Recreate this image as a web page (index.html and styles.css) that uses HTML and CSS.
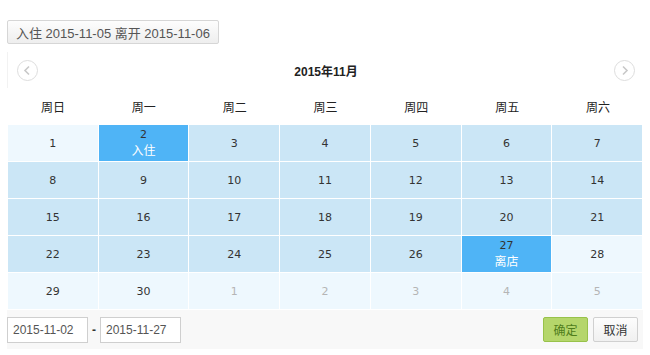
FILE: index.html
```html
<!DOCTYPE html>
<html lang="zh-CN">
<head>
    <meta charset="UTF-8">
    <meta name="viewport" content="width=device-width, initial-scale=1.0">
    <title>入住离店日历</title>
    <link rel="stylesheet" href="styles.css">
</head>
<body>
    <div class="page">
        <button class="range-toggle">入住 2015-11-05 离开 2015-11-06</button>

        <div class="calendar">
            <div class="cal-head">
                <span class="nav prev">
                    <svg width="21" height="21" viewBox="0 0 21 21"><circle cx="10.5" cy="10.5" r="10" fill="none" stroke="#ddd"/><path d="M12 6.5 L8 10.5 L12 14.5" fill="none" stroke="#c8c8c8" stroke-width="1.6"/></svg>
                </span>
                <span class="month">2015年11月</span>
                <span class="nav next">
                    <svg width="21" height="21" viewBox="0 0 21 21"><circle cx="10.5" cy="10.5" r="10" fill="none" stroke="#ddd"/><path d="M9 6.5 L13 10.5 L9 14.5" fill="none" stroke="#c8c8c8" stroke-width="1.6"/></svg>
                </span>
            </div>

            <div class="week">
                <span>周日</span><span>周一</span><span>周二</span><span>周三</span><span>周四</span><span>周五</span><span>周六</span>
            </div>

            <div class="days">
                <div class="day past">1</div>
                <div class="day picked">2<small>入住</small></div>
                <div class="day">3</div>
                <div class="day">4</div>
                <div class="day">5</div>
                <div class="day">6</div>
                <div class="day">7</div>

                <div class="day">8</div>
                <div class="day">9</div>
                <div class="day">10</div>
                <div class="day">11</div>
                <div class="day">12</div>
                <div class="day">13</div>
                <div class="day">14</div>

                <div class="day">15</div>
                <div class="day">16</div>
                <div class="day">17</div>
                <div class="day">18</div>
                <div class="day">19</div>
                <div class="day">20</div>
                <div class="day">21</div>

                <div class="day">22</div>
                <div class="day">23</div>
                <div class="day">24</div>
                <div class="day">25</div>
                <div class="day">26</div>
                <div class="day picked">27<small>离店</small></div>
                <div class="day past">28</div>

                <div class="day past">29</div>
                <div class="day past">30</div>
                <div class="day other">1</div>
                <div class="day other">2</div>
                <div class="day other">3</div>
                <div class="day other">4</div>
                <div class="day other">5</div>
            </div>

            <div class="cal-foot">
                <input type="text" value="2015-11-02">
                <span class="dash">-</span>
                <input type="text" value="2015-11-27">
                <div class="actions">
                    <button class="btn ok">确定</button>
                    <button class="btn cancel">取消</button>
                </div>
            </div>
        </div>
    </div>
</body>
</html>
```

FILE: styles.css
```css
:root {
    --cell-color: #cbe6f6;
    --cell-light: #eef8fe;
    --cell-picked: #4fb4f6;
    --text-color: #333;
}

body {
    margin: 0;
    padding: 0;
    background: #fff;
    color: var(--text-color);
    font-family: "Liberation Sans", "Noto Sans CJK SC", sans-serif;
}

.page {
    padding: 20px 0 0 7px;
    width: 636px;
}

.range-toggle {
    display: block;
    height: 24px;
    padding: 0 8px;
    font-family: "Liberation Sans", "Noto Sans CJK SC", sans-serif;
    font-size: 13px;
    color: #555;
    background: linear-gradient(#fdfdfd, #eeeeee);
    border: 1px solid #d6d6d6;
    border-radius: 2px;
}

.calendar {
    margin-top: 8px;
}

.cal-head {
    display: flex;
    align-items: center;
    justify-content: space-between;
    height: 36px;
    padding: 0 8px 0 9px;
    border-left: 1px solid #f2f2f2;
}

.nav {
    display: flex;
    width: 21px;
    height: 21px;
}

.month {
    font-family: "Liberation Sans", "Noto Sans CJK SC", sans-serif;
    font-size: 12px;
    font-weight: bold;
    color: #222;
}

.week {
    display: grid;
    grid-template-columns: repeat(7, 1fr);
    gap: 1px;
    height: 37px;
    align-items: center;
    padding-left: 1px;
    font-family: "Noto Sans CJK SC", sans-serif;
    font-size: 12px;
    color: #222;
    text-align: center;
}

.days {
    display: grid;
    grid-template-columns: repeat(7, 1fr);
    grid-auto-rows: 36px;
    gap: 1px 1px;
    margin-left: 1px;
    width: 634px;
}

.day {
    display: flex;
    flex-direction: column;
    align-items: center;
    justify-content: center;
    background: var(--cell-color);
    font-family: "DejaVu Sans", "Noto Sans CJK SC", sans-serif;
    font-size: 11px;
    color: var(--text-color);
}

.day small {
    font-family: "Noto Sans CJK SC", sans-serif;
    font-size: 12px;
    line-height: 16px;
    color: #fff;
}

.day.picked {
    background: var(--cell-picked);
    line-height: 14px;
}

.day.past {
    background: var(--cell-light);
}

.day.other {
    background: var(--cell-light);
    color: #b5b5b5;
}

.cal-foot {
    display: flex;
    align-items: center;
    height: 39px;
    margin-top: 1px;
    padding-right: 5px;
    background: #f8f8f8;
}

.cal-foot input {
    box-sizing: border-box;
    width: 81px;
    height: 26px;
    margin: 0;
    padding: 0 5px;
    font-family: "Liberation Sans", sans-serif;
    font-size: 12px;
    color: #555;
    background: #fff;
    border: 1px solid #cfcfcf;
}

.dash {
    width: 12px;
    text-align: center;
    font-size: 12px;
    font-weight: bold;
    color: #333;
}

.actions {
    display: flex;
    gap: 5px;
    margin-left: auto;
}

.btn {
    width: 45px;
    height: 25px;
    padding: 0;
    font-family: "Noto Sans CJK SC", sans-serif;
    font-size: 12px;
    border-radius: 2px;
}

.btn.ok {
    color: #4f7d1b;
    background: #b5d66b;
    border: 1px solid #98c24a;
}

.btn.cancel {
    color: #333;
    background: linear-gradient(#fdfdfd, #f0f0f0);
    border: 1px solid #d0d0d0;
}
```
